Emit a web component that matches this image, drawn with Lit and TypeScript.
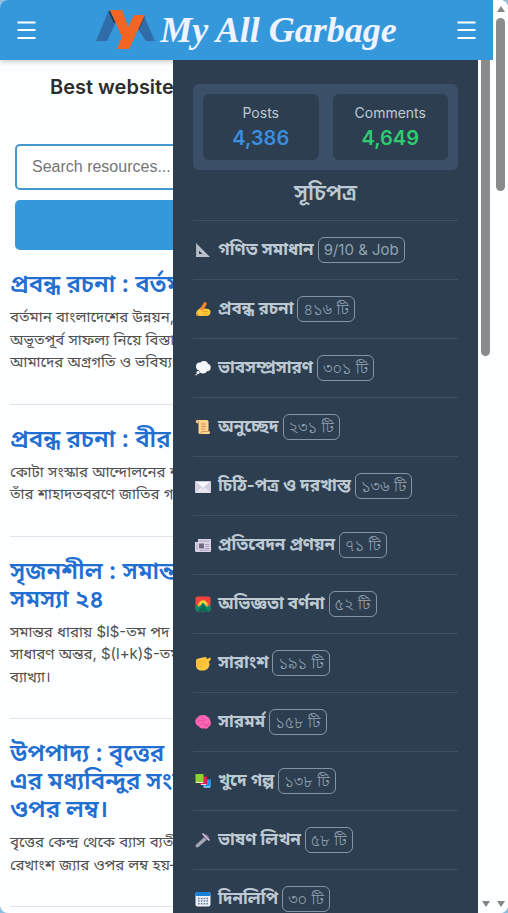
import { LitElement, html, css, svg } from "lit";
import { customElement } from "lit/decorators.js";

const sans = css`Inter, "Noto Sans", "Noto Sans Bengali", "Liberation Sans", sans-serif`;

const icons: Record<string, unknown> = {
  ruler: svg`<path d="M1 1L15 15H1Z M4 8.500V12H7.500Z" fill="#b9c0ca" fill-rule="evenodd"/><path d="M1 3h1.500M1 6h1.500M1 9h1.500M1 12h1.500" stroke="#7d8590" stroke-width=".7"/>`,
  writing: svg`<path d="M1 12.500Q1 10 4 8L8 5Q10 4 9.500 6L9 7.500L13.500 8Q15.500 8.500 15.500 10.500Q15.500 14.500 12 15H5Q1 15 1 12.500Z" fill="#ffc83d"/><path d="M5 8L9 1.500Q10.200 .6 11.200 1.600T11.300 4L7.500 10Z" fill="#ff822d"/><path d="M1 14.500L2 12L3.500 13.500Z" fill="#ff822d"/><path d="M8 10.500h5M8 12.700h4.500" stroke="#e39d1c" stroke-width=".8"/>`,
  thought: svg`<g fill="#f4f5fa"><circle cx="5" cy="6.500" r="4"/><circle cx="9" cy="5" r="4"/><circle cx="12" cy="7.500" r="3.700"/><circle cx="8" cy="9.500" r="4"/><circle cx="3" cy="12.600" r="1.600"/><circle cx="1.200" cy="14.800" r=".8"/></g>`,
  scroll: svg`<path d="M2 1h10q1.500 0 1.500 1.500V12H15v1.500Q15 15 13.500 15H5Q3.500 15 3.500 13.500V4H2Q.8 4 .8 2.500T2 1Z" fill="#ffd590"/><path d="M2 1q1.500 0 1.500 1.500V4H2M5 15q1.500 0 1.500-2.500H15" fill="none" stroke="#d99a55"/><path d="M6 5h5M6 7.500h5M6 10h4" stroke="#d08c4a"/>`,
  mail: svg`<rect y="3" width="16" height="12" rx="1" fill="#d5d2e3"/><path d="M0 14.500L6 8.500H10L16 14.500" fill="#e9e7f1" stroke="#b9b5cb" stroke-width=".5"/><path d="M0 3.500H16L8 10.500Z" fill="#f7f6fb" stroke="#b9b5cb" stroke-width=".6"/>`,
  news: svg`<path d="M0 5H3V2H16V14Q16 15 15 15H1.500Q0 15 0 13.500Z" fill="#dcd6ea"/><path d="M4 4h10.500M10 7.500h4.500M10 9.500h4.500M10 11.500h4.500M4.500 13.300h10" stroke="#aaa2bd"/><rect x="4" y="6.500" width="5" height="5" fill="#70697f"/><path d="M2 6V13" stroke="#a59db9"/>`,
  sunrise: svg`<rect x=".5" y=".5" width="15" height="15" rx="2" fill="#f8423d"/><path d="M2 11a6 6 0 0 1 12 0" fill="#ff9a2d"/><circle cx="8" cy="8" r="3.700" fill="#ffd13b"/><path d="M.5 8L4 11L8 6.500L12 11L15.500 8V13.500Q15.500 15.500 13.500 15.500H2.500Q.5 15.500 .5 13.500Z" fill="#07866c"/><path d="M3 15.500L8 8L13 15.500Z" fill="#0a6c56"/>`,
  fist: svg`<path d="M1 6Q1 3.500 3.500 3.500L10 2Q12 2 12 4L15.500 2.500Q16.500 5 13.500 7Q15.500 8.500 14 11.500Q12.500 15.500 8 15.500H5Q1.500 14.500 1 11Z" fill="#ffc83d"/><path d="M2 6.500h6M1.500 9h6M2.500 11.500h5M8 6Q12 6 10 10" fill="none" stroke="#e8a62c" stroke-width=".7"/>`,
  brain: svg`<path d="M.5 9Q-.5 5 2.500 3.500Q4 .8 7 1.200Q10 .5 12 2.500Q15 3.500 15.300 7Q17 11 14 12.500Q12 16 9 14.200Q5 15 4 12.500Q1.500 12 .5 9Z" fill="#ff65b5"/><path d="M3 8Q5 5 7 7T11 5M6 3.500Q7 6 9 4M5 11Q8 8 10 10.500T14 9M10 13Q10 11 12 11" fill="none" stroke="#d94a98" stroke-width=".8"/>`,
  books: svg`<rect x="8" y="6.500" width="8" height="8" fill="#2394e8"/><path d="M9 14h6" stroke="#d7f0ff"/><rect x="5" y="3.500" width="7" height="8.500" fill="#d52755"/><path d="M6 11.500h5" stroke="#fbe3e8"/><rect x=".5" y="1" width="8" height="9" rx=".5" fill="#8bd22f"/><path d="M1 9.500h7" stroke="#effbd8"/>`,
  mic: svg`<path d="M9.500 5L12 7.500L3.500 15Q1.500 16 .8 14.800T1.200 12.500Z" fill="#a6a4b5"/><path d="M9 3Q11 1.500 13 3.500T13.500 7L11.500 8L8.500 5Z" fill="#77728a"/><path d="M7.500 1.500L14.500 8.500" stroke="#d9bfd8" stroke-width="1.600"/>`,
  calendar: svg`<path d="M.5 3Q.5 1 2.500 1H13.500Q15.500 1 15.500 3V13.500Q15.500 15.500 13.500 15.500H2.500Q.5 15.500 .5 13.500Z" fill="#eef0f8"/><path d="M.5 5V3Q.5 1 2.500 1H13.500Q15.500 1 15.500 3V5Z" fill="#1681d8"/><path d="M3 7.500h10M3 10h10M3 12.700h10" stroke="#617c9e" stroke-width="1.500" stroke-dasharray="1.600 1.200"/>`,
};

const categories = [
  { icon: "ruler", name: "গণিত সমাধান", count: "9/10 & Job", latin: true },
  { icon: "writing", name: "প্রবন্ধ রচনা", count: "৪১৬ টি" },
  { icon: "thought", name: "ভাবসম্প্রসারণ", count: "৩০১ টি" },
  { icon: "scroll", name: "অনুচ্ছেদ", count: "২৩১ টি" },
  { icon: "mail", name: "চিঠি-পত্র ও দরখাস্ত", count: "১৩৬ টি" },
  { icon: "news", name: "প্রতিবেদন প্রণয়ন", count: "৭১ টি" },
  { icon: "sunrise", name: "অভিজ্ঞতা বর্ণনা", count: "৫২ টি" },
  { icon: "fist", name: "সারাংশ", count: "১৯১ টি" },
  { icon: "brain", name: "সারমর্ম", count: "১৫৮ টি" },
  { icon: "books", name: "খুদে গল্প", count: "১৩৮ টি" },
  { icon: "mic", name: "ভাষণ লিখন", count: "৫৮ টি" },
  { icon: "calendar", name: "দিনলিপি", count: "৩০ টি" },
];

const articles = [
  { title: ["প্রবন্ধ রচনা : বর্তমান"], text: ["বর্তমান বাংলাদেশের উন্নয়ন,", "অভূতপূর্ব সাফল্য নিয়ে বিস্তারিত", "আমাদের অগ্রগতি ও ভবিষ্যৎ"] },
  { title: ["প্রবন্ধ রচনা : বীর"], text: ["কোটা সংস্কার আন্দোলনের শহীদ", "তাঁর শাহাদতবরণে জাতির গর্ব"] },
  { title: ["সৃজনশীল : সমান্তর", "সমস্যা ২৪"], text: ["সমান্তর ধারায় $l$-তম পদ ও", "সাধারণ অন্তর, $(l+k)$-তম", "ব্যাখ্যা।"] },
  { title: ["উপপাদ্য : বৃত্তের", "এর মধ্যবিন্দুর সংযোগ", "ওপর লম্ব।"], text: ["বৃত্তের কেন্দ্র থেকে ব্যাস ব্যতীত", "রেখাংশ জ্যার ওপর লম্ব হয়—"] },
];

@customElement("category-menu")
class CategoryMenu extends LitElement {
  static styles = css`
    :host { display: block; box-sizing: border-box; padding: 24px 20px 0; color: #bdc9d3; font-family: ${sans}; }
    .stats { display: grid; grid-template-columns: 1fr 1fr; gap: 14px; padding: 10px; border-radius: 6px; background: #3b4f66; }
    .stat { display: flex; flex-direction: column; align-items: center; height: 66px; box-sizing: border-box; padding-top: 7px; border-radius: 6px; background: #2c3e50; }
    .label { font-size: 14px; line-height: 24px; }
    .number { font-size: 20px; line-height: 26px; font-weight: 600; }
    .posts { color: #3b8ddd; }
    .comments { color: #2ecc71; }
    h2 { margin: 0; height: 50px; text-align: center; font-size: 22px; line-height: 44px; font-weight: 600; }
    ul { list-style: none; margin: 0; padding: 0; }
    li { border-top: 1px solid #40515f; }
    a { display: flex; align-items: center; height: 58px; padding-left: 2px; color: inherit; text-decoration: none; white-space: nowrap; font-size: 17px; font-weight: 700; }
    svg { width: 16px; height: 16px; margin-right: 7px; flex: none; }
    .count { box-sizing: border-box; height: 26px; line-height: 24px; margin-left: 4px; padding: 0 5px; border: 1px solid #8395a5; border-radius: 6px; color: #93a3b1; font-size: 16px; font-weight: 300; }
    .latin { font-size: 15px; font-weight: 400; }
  `;
  render() {
    return html`
      <div class="stats">
        <div class="stat"><span class="label">Posts</span><span class="number posts">4,386</span></div>
        <div class="stat"><span class="label">Comments</span><span class="number comments">4,649</span></div>
      </div>
      <h2>সূচিপত্র</h2>
      <ul>
        ${categories.map((c) => html`
          <li><a href="#"><svg viewBox="0 0 16 16" aria-hidden="true">${icons[c.icon]}</svg><span>${c.name}</span><span class="count ${c.latin ? "latin" : ""}">${c.count}</span></a></li>`)}
      </ul>`;
  }
}

@customElement("scroll-track")
class ScrollTrack extends LitElement {
  static styles = css`
    :host { display: flex; flex-direction: column; align-items: center; width: 15px; background: #fcfeff; }
    .up, .down { width: 0; height: 0; border: 4px solid transparent; }
    .up { border-top: 0; border-bottom: 6px solid #858585; margin: 6px 0; }
    .down { border-bottom: 0; border-top: 6px solid #858585; margin: auto 0 6px; }
    .thumb { width: 9px; border-radius: 5px; background: #8b8b8b; height: var(--thumb); }
    :host([inner]) .up { display: none; }
    :host([inner]) .thumb { border-radius: 0 0 5px 5px; }
  `;
  render() {
    return html`<div class="up"></div><div class="thumb"></div><div class="down"></div>`;
  }
}

@customElement("app-root")
class AppRoot extends LitElement {
  static styles = css`
    :host { display: block; height: 100vh; background: #8dbfdf; font-family: ${sans}; }
    .window { display: flex; height: 100%; overflow: hidden; border-radius: 8px; background: #fdfeff; }
    .page { display: flex; flex-direction: column; flex: 1; min-width: 0; }
    header { display: flex; align-items: center; justify-content: space-between; flex: none; height: 60px; padding: 0 16px; box-sizing: border-box; background: #3498db; box-shadow: 0 2px 5px rgb(0 0 0 / 20%); }
    .toggle { display: flex; padding: 0; border: 0; background: none; }
    .toggle svg { width: 21px; height: 24px; }
    .brand { display: flex; align-items: center; gap: 4px; color: #eef3ff; text-decoration: none; font: italic 700 36px/60px "Liberation Serif", serif; white-space: nowrap; }
    .brand svg { width: 60px; height: 42px; }
    .body { position: relative; flex: 1; min-height: 0; overflow: hidden; }
    main { white-space: nowrap; }
    h1 { margin: 0; padding: 12px 50px 0; height: 84px; box-sizing: border-box; color: #2d2d2d; font-size: 20px; line-height: 30px; font-weight: 600; }
    form { display: flex; flex-direction: column; gap: 10px; padding: 0 15px; }
    input { height: 46px; box-sizing: border-box; padding: 0 15px; border: 2px solid #4398cf; border-radius: 5px; background: #fff; font: 16px "Liberation Sans", sans-serif; }
    input::placeholder { color: #757575; }
    .search { height: 50px; border: 0; border-radius: 5px; background: #3498db; color: #fff; font: 16px "Liberation Sans", sans-serif; }
    article { margin: 0 10px; padding: 20px 0 30px; border-bottom: 1px solid #e4e4e4; }
    article h2 { margin: 0 0 8px; font-size: 24px; line-height: 28px; font-weight: 600; }
    article a { color: #226fd2; text-decoration: none; }
    p { margin: 0; color: #505050; font-size: 15px; line-height: 1.5; }
    .drawer { position: absolute; top: 0; right: 0; bottom: 0; display: flex; width: 320px; }
    category-menu { flex: 1; overflow: hidden; background: #2c3e50; }
    .inner { --thumb: 296px; }
    .outer { --thumb: 173px; }
  `;
  private bars() {
    return html`<svg viewBox="0 0 21 24" aria-hidden="true"><path d="M1.500 4.500h18M1.500 12h18M1.500 20h18" stroke="#fff" stroke-width="2"/></svg>`;
  }
  render() {
    return html`
      <div class="window">
        <div class="page">
          <header>
            <button class="toggle" aria-label="Menu">${this.bars()}</button>
            <a class="brand" href="#">
              <svg viewBox="0 0 60 42" aria-hidden="true">
                <path d="M0 32L12 3L19 15L11 32Z M48 7L59 32H50L42 20Z" fill="#2f6da8"/>
                <path d="M13 2L19 14M48 7L42 20" stroke="#253a55" stroke-width="2"/>
                <path d="M14 1H26L32 18L38 6H49L33 40H21L26 28Z" fill="#f26522"/>
              </svg>
              <span>My All Garbage</span>
            </a>
            <button class="toggle" aria-label="Categories">${this.bars()}</button>
          </header>
          <div class="body">
            <main>
              <h1>Best website for students</h1>
              <form>
                <input type="search" aria-label="Search resources" placeholder="Search resources..." />
                <button class="search" type="button">Search</button>
              </form>
              ${articles.map((a) => html`
                <article>
                  <h2><a href="#">${a.title.map((line, i) => html`${i ? html`<br />` : ""}${line}`)}</a></h2>
                  <p>${a.text.map((line, i) => html`${i ? html`<br />` : ""}${line}`)}</p>
                </article>`)}
            </main>
            <aside class="drawer">
              <category-menu></category-menu>
              <scroll-track class="inner" inner></scroll-track>
            </aside>
          </div>
        </div>
        <scroll-track class="outer"></scroll-track>
      </div>`;
  }
}
